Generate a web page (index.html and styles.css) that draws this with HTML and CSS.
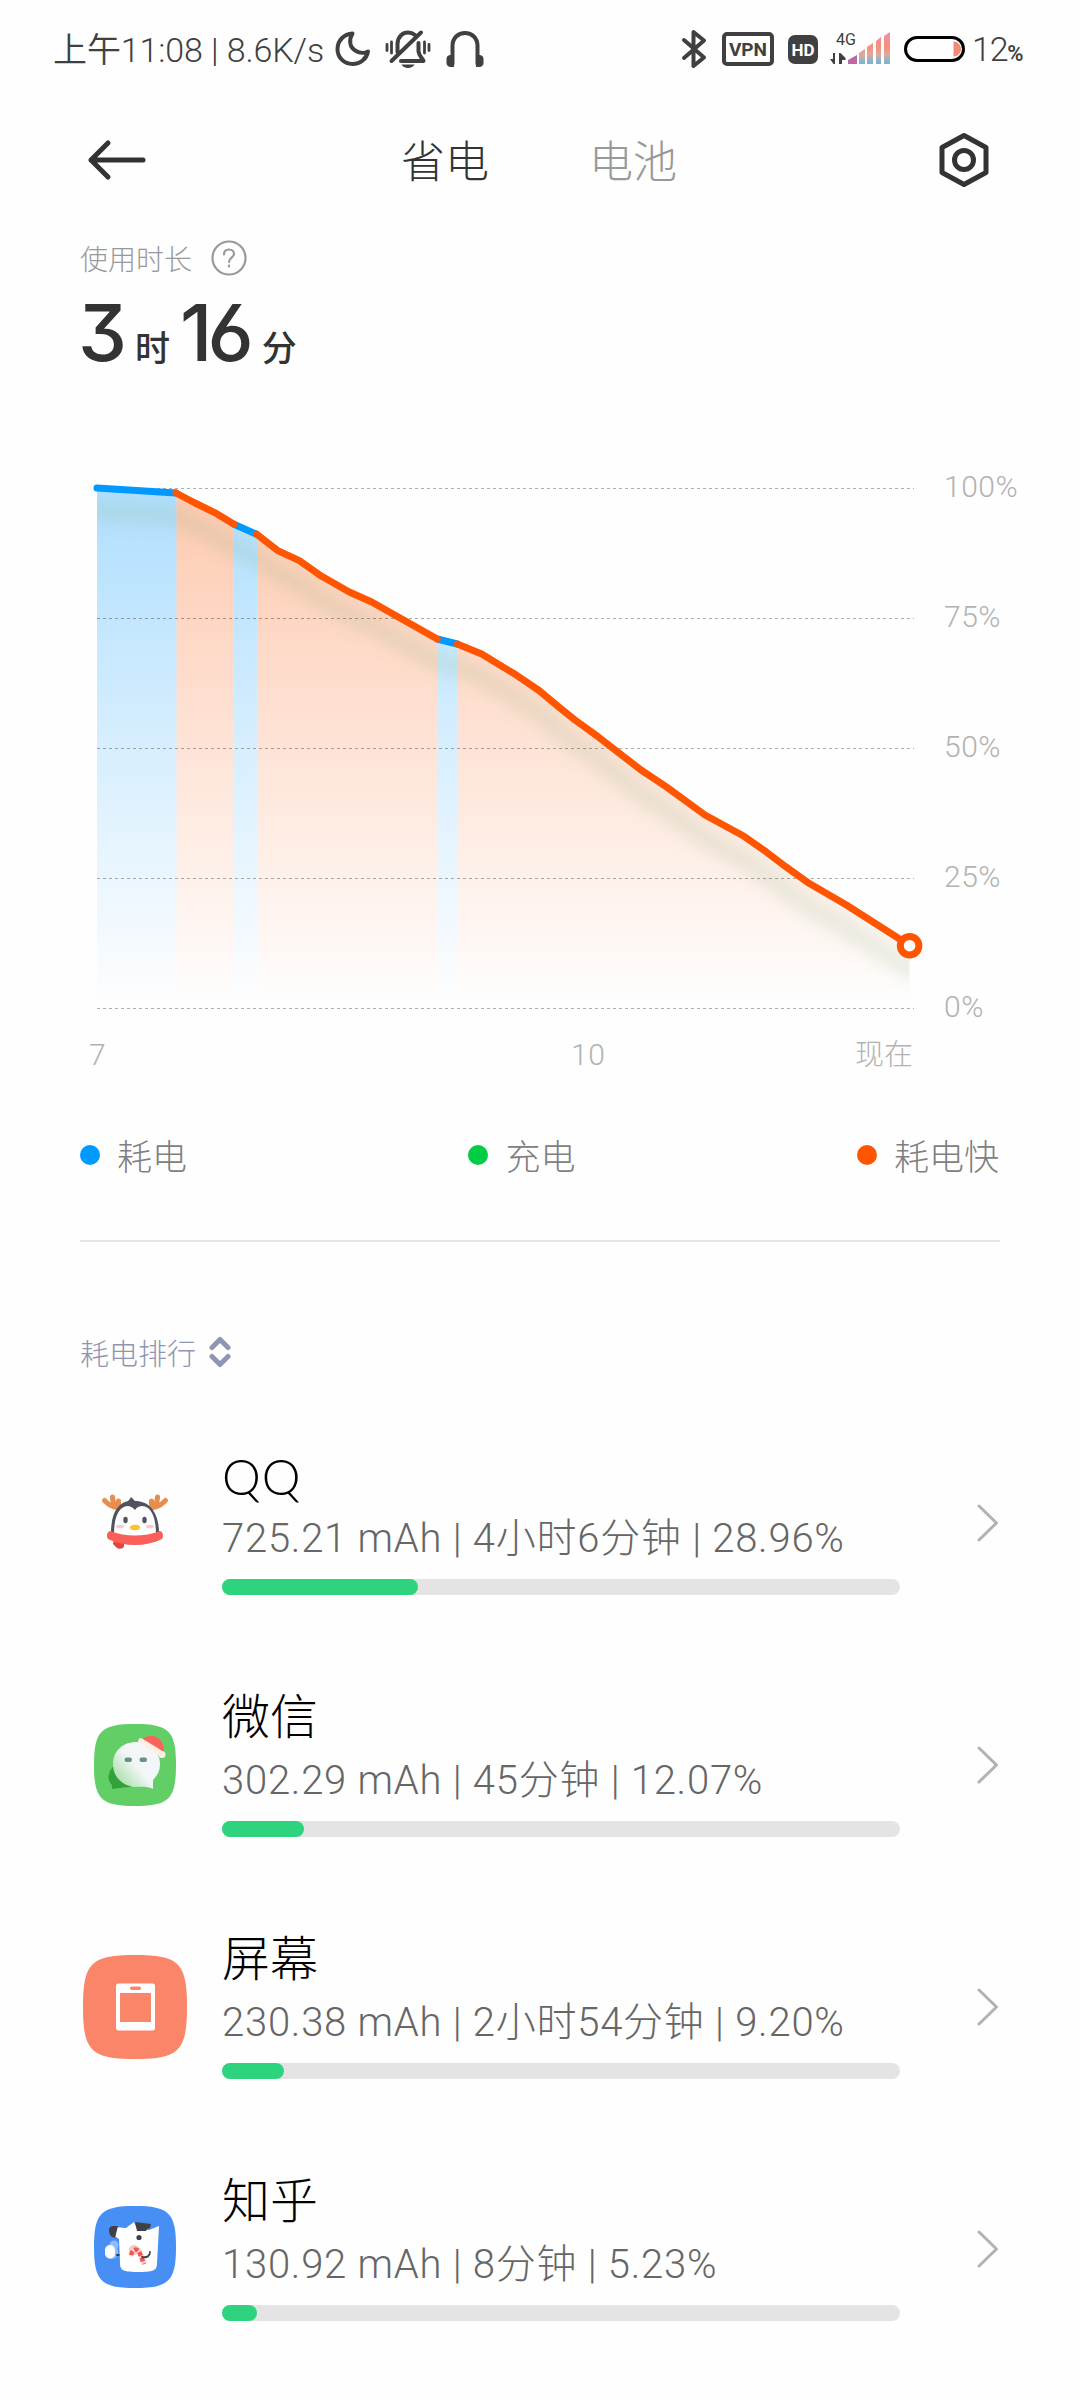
FILE: index.html
```
<!DOCTYPE html>
<html lang="zh-CN">
<head>
  <meta charset="UTF-8">
  <title>省电</title>
  <link rel="stylesheet" href="styles.css">
</head>
<body>
  <div class="status-bar">
    <span class="clock">上午11:08 | 8.6K/s</span>
    <svg class="i-moon" width="36" height="36" viewBox="0 0 36 36"><path d="M17.500 2.500C9 3 2.500 9.500 2.500 18c0 8.500 6.500 15 15 15 8 0 14-5 15.500-12.500-3 1.700-8 2-12-.5C14.500 16.500 13.500 9 17.500 2.500z"/></svg>
    <svg class="i-bell" width="46" height="40" viewBox="0 0 46 40">
      <path d="M12.500 23v-8.500C13 7 18 3.500 23 3.500c2.500 0 5 .8 7 2.500M33.500 14v8.500c.5 4 3.500 6.500 5 9.500H16M6.500 32L36 3.500"/>
      <path class="thin" d="M2 15.500v6M6.500 13v11M39.500 13v11M44 15.500v6"/>
      <path class="solid" d="M16.500 35.500h13c-2 4.500-11 4.500-13 0z"/>
    </svg>
    <svg class="i-phones" width="38" height="38" viewBox="0 0 38 38"><path d="M6.500 34V16C6.500 8 12 3 19 3s12.500 5 12.500 13v18"/><path class="solid" d="M.5 29c0-3 2-4 4-4H8v12H5c-3 0-4.500-2-4.500-4zM37.500 29c0-3-2-4-4-4H30v12h3c3 0 4.500-2 4.500-4z"/></svg>
    <span class="spacer"></span>
    <svg class="i-bt" width="26" height="40" viewBox="0 0 26 40"><path d="M3 11l20 17.500L12.500 37V3L23 11.500 3 29"/></svg>
    <span class="vpn">VPN</span>
    <span class="hd">HD</span>
    <svg class="i-signal" width="62" height="34" viewBox="0 0 62 34">
      <defs>
        <linearGradient id="sig" x1="0" y1="0" x2="0" y2="32" gradientUnits="userSpaceOnUse">
          <stop offset="0" stop-color="#f08cae"/><stop offset=".45" stop-color="#f99079"/><stop offset=".72" stop-color="#dba9a0"/><stop offset="1" stop-color="#6bb8dd"/>
        </linearGradient>
      </defs>
      <text x="6" y="12.500">4G</text>
      <path class="solid" d="M5 21v11H3.500L0 27h3v-6zM9 32V21h1.500l5 5v2H12v4z"/>
      <path fill="#b969a5" d="M18 32v-4l9-5v9z"/>
      <path fill="url(#sig)" d="M29 32V21l6-4v15zM37 32V15l6-4v21zM46 32V9l5-4v27zM54 32V4l6-4v32z"/>
    </svg>
    <svg class="i-battery" width="62" height="28" viewBox="0 0 62 28"><rect x="1.500" y="2.500" width="58" height="23" rx="11.500"/><path d="M49.500 6.500c4 0 7.500 3.500 7.500 7.500s-3.500 7.500-7.500 7.500z"/></svg>
    <span class="level">12<small>%</small></span>
  </div>

  <div class="header">
    <svg class="i-back" width="60" height="44" viewBox="0 0 60 44"><path d="M22 5L5 22l17 17M5 22h52"/></svg>
    <div class="tabs">
      <span class="tab active">省电</span>
      <span class="tab">电池</span>
    </div>
    <svg class="i-settings" width="52" height="56" viewBox="0 0 52 56"><path d="M26 3.500L48 15.500v25L26 52.500 4 40.500v-25z"/><circle cx="26" cy="28" r="9.500"/></svg>
  </div>

  <div class="usage">
    <div class="usage-label">使用时长
      <svg width="36" height="36" viewBox="0 0 36 36"><circle cx="18" cy="18" r="16.500"/><path d="M13 14.500c0-3.500 2-5 5-5s5 2 5 4.500c0 3.500-5 4-5 8"/><path d="M18 25.500v1"/></svg>
    </div>
    <div class="usage-time"><b>3</b><i>时</i><b>16</b><i>分</i></div>
  </div>

  <svg class="chart" width="1080" height="660" viewBox="0 440 1080 660">
    <defs>
      <linearGradient id="blue" x1="0" y1="488" x2="0" y2="1008" gradientUnits="userSpaceOnUse"><stop offset="0" stop-color="#09f" stop-opacity=".31"/><stop offset="1" stop-color="#09f" stop-opacity="0"/></linearGradient>
      <linearGradient id="orange" x1="0" y1="488" x2="0" y2="1008" gradientUnits="userSpaceOnUse"><stop offset="0" stop-color="#f50" stop-opacity=".31"/><stop offset="1" stop-color="#f50" stop-opacity="0"/></linearGradient>
      <filter id="soft" x="-5%" y="-5%" width="110%" height="115%"><feGaussianBlur stdDeviation="7"/></filter>
      <clipPath id="area"><path d="M97 488L176 493 195 503 216.700 513.700 234 524.300 256.700 534.300 277.300 550.300 299.300 560.700 321.700 576.300 349.300 592 371.700 602 437.300 639 457.300 644 481.700 654 516.700 675.300 539 690.500 560 708 575 720 598 736.700 641 770 666 786.700 705 815 744 836.300 766 851.700 785.700 866.700 809 883.300 846.400 905 909.600 945.700V1008H97z"/></clipPath>
    </defs>
    <g clip-path="url(#area)">
      <path fill="url(#blue)" d="M97 480h79.500v528H97zM234 480h23.500v528H234zM437.300 480h20v528h-20z"/>
      <path fill="url(#orange)" d="M176.500 480H234v528h-57.500zM257.500 480h179.800v528H257.500zM457.300 480H910v528H457.300z"/>
      <path class="shadow" filter="url(#soft)" transform="translate(0 23)" d="M96 488L176 493 195 503 216.700 513.700 234 524.300 256.700 534.300 277.300 550.300 299.300 560.700 321.700 576.300 349.300 592 371.700 602 437.300 639 457.300 644 481.700 654 516.700 675.300 539 690.500 560 708 575 720 598 736.700 641 770 666 786.700 705 815 744 836.300 766 851.700 785.700 866.700 809 883.300 846.400 905 909.600 945.700"/>
    </g>
    <path class="grid" d="M97 488.500h817M97 618.500h817M97 748.500h817M97 878.500h817M97 1008.500h817"/>
    <path class="line slow" d="M97 488L176 493M234 524.300l22.700 10M437.300 639l20 5"/>
    <path class="line fast" d="M176 493L195 503 216.700 513.700 234 524.300M256.700 534.300L277.300 550.300 299.300 560.700 321.700 576.300 349.300 592 371.700 602 437.300 639M457.300 644L481.700 654 516.700 675.300 539 690.500 560 708 575 720 598 736.700 641 770 666 786.700 705 815 744 836.300 766 851.700 785.700 866.700 809 883.300 846.400 905 900 939.300"/>
    <circle class="now" cx="909.600" cy="945.700" r="9.300"/>
    <g class="axis">
      <text x="944" y="497">100%</text>
      <text x="944" y="627">75%</text>
      <text x="944" y="757">50%</text>
      <text x="944" y="887">25%</text>
      <text x="944" y="1017">0%</text>
      <text x="89" y="1065">7</text>
      <text x="571" y="1065">10</text>
      <text x="855" y="1065" class="zh">现在</text>
    </g>
  </svg>

  <div class="legend">
    <span class="blue">耗电</span>
    <span class="green">充电</span>
    <span class="orange">耗电快</span>
  </div>

  <div class="rank-title">耗电排行
    <svg width="22" height="32" viewBox="0 0 22 32"><path d="M3 11.500l8-8 8 8M3 20.500l8 8 8-8"/></svg>
  </div>

  <div class="rank">
    <div class="row">
      <svg class="app" width="110" height="110" viewBox="0 0 110 110">
        <g stroke="#e88d4f" stroke-width="5" stroke-linecap="round" fill="none"><path d="M39 40c-8-1-11-4-14.500-7.500M32.500 29c0 4 .5 6 3 9M38.500 33v7"/><path d="M71 40c8-1 11-4 14.500-7.500M77.500 29c0 4-.5 6-3 9M71.500 33v7"/></g>
        <path fill="#50525e" d="M31 65c0-20 7-30 17-32 1-1 2-2 3-4l4 4c15 0 24 12 24 32z"/>
        <path fill="#fdfdfe" d="M34 66c0-15 4-27 13-28 4 0 6 2 8 4 2-3 4-4 8-4 9 1 13 13 13 28z"/>
        <ellipse cx="45.500" cy="52" rx="2.200" ry="3.300" fill="#50525e"/><ellipse cx="64.500" cy="52" rx="2.200" ry="3.300" fill="#50525e"/>
        <ellipse cx="40" cy="58.500" rx="4" ry="1.800" fill="#fcc9cb"/><ellipse cx="70" cy="58.500" rx="4" ry="1.800" fill="#fcc9cb"/>
        <ellipse cx="55" cy="59.500" rx="5" ry="2.800" fill="#f9c22e"/>
        <path fill="#df463f" d="M34 70h10v8c0 3-6 4-8 1l-3-3z"/>
        <path fill="#fa6059" d="M30 63c16 6 34 6 50 0 3 1 4 5 2 8-16 8-38 8-54 0-2-3-1-7 2-8z"/>
      </svg>
      <div class="info">
        <div class="name latin">QQ</div>
        <div class="detail">725.21 mAh | 4小时6分钟 | 28.96%</div>
        <div class="track"><div class="fill" style="width: 28.96%"></div></div>
      </div>
      <svg class="more" width="24" height="40" viewBox="0 0 24 40"><path d="M3 3l17.500 17L3 37"/></svg>
    </div>

    <div class="row">
      <svg class="app" width="110" height="110" viewBox="0 0 110 110">
        <defs><linearGradient id="bubble" x1=".1" y1=".85" x2=".5" y2=".5"><stop offset="0" stop-color="#a9dfaa"/><stop offset="1" stop-color="#f3f6f8"/></linearGradient></defs>
        <path fill="#61cf66" d="M14 55c0-34 7-41 41-41s41 7 41 41-7 41-41 41-41-7-41-41z"/>
        <path fill="#33a23b" d="M36 54c-8 6-10 16-4 21v4c12-2 20-1 30-6z"/>
        <path fill="url(#bubble)" d="M56 32c14 0 24 9 24 22 0 7-3 12-7 16v9c-6-3-12-2-19-2-12-2-21-10-21-23 0-13 10-22 23-22z"/>
        <rect x="44.500" y="47.500" width="7.500" height="4.500" rx="2.250" fill="#6b8f80"/><rect x="59.500" y="47.500" width="7.500" height="4.500" rx="2.250" fill="#6b8f80"/>
        <path fill="#fa625c" d="M61 31c6-8 22-7 23 9v3z"/>
        <path stroke="#fdeee0" stroke-width="5.500" d="M61 31L79 42"/>
        <circle cx="82" cy="44.500" r="3.500" fill="#fdeee0"/>
      </svg>
      <div class="info">
        <div class="name">微信</div>
        <div class="detail">302.29 mAh | 45分钟 | 12.07%</div>
        <div class="track"><div class="fill" style="width: 12.07%"></div></div>
      </div>
      <svg class="more" width="24" height="40" viewBox="0 0 24 40"><path d="M3 3l17.500 17L3 37"/></svg>
    </div>

    <div class="row">
      <svg class="app" width="110" height="110" viewBox="0 0 110 110">
        <path fill="#fb8569" d="M3 55C3 11 11 3 55 3s52 8 52 52-8 52-52 52S3 99 3 55z"/>
        <rect x="36" y="31.500" width="39" height="47" rx="2.500" fill="#fff"/>
        <path fill="#fb8569" d="M40 41h31v29H40z"/><rect x="50" y="34.500" width="11" height="3.500" rx="1.700" fill="#fb8569"/>
      </svg>
      <div class="info">
        <div class="name">屏幕</div>
        <div class="detail">230.38 mAh | 2小时54分钟 | 9.20%</div>
        <div class="track"><div class="fill" style="width: 9.2%"></div></div>
      </div>
      <svg class="more" width="24" height="40" viewBox="0 0 24 40"><path d="M3 3l17.500 17L3 37"/></svg>
    </div>

    <div class="row">
      <svg class="app" width="110" height="110" viewBox="0 0 110 110">
        <path fill="#488ff5" d="M14 53c0-34 7-41 41-41s41 7 41 41-7 41-41 41-41-7-41-41z"/>
        <circle cx="34" cy="51" r="4.500" fill="#8fbdfb"/>
        <rect x="25" y="51" width="13" height="14" rx="6" fill="#8fbdfb"/><rect x="25" y="51" width="10" height="13.500" rx="5" fill="#fff"/>
        <path stroke="#3c3d42" stroke-width="2" d="M37 61h4"/>
        <path fill="#fff" d="M34 33l12 1 8-6 3 7 12 1 10-4-2 37c0 8-4 9-20 9s-17-3-17-10l-1-23-9-6z"/>
        <path fill="#404145" d="M29 36c0-3 2-4 4-4h5l-3 12c-4-1-6-3-6-8zM55 28l16 2-1 4-3 1-1 2H57z"/>
        <circle cx="59" cy="43.500" r="2.600" fill="#404145"/>
        <circle cx="54" cy="56" r="5" fill="#fcc5c4"/>
        <path fill="none" stroke="#fbd3d1" stroke-width="5" d="M52 60c2-6 7-6 8-1l4 9"/>
        <path fill="none" stroke="#ef5750" stroke-width="4.500" stroke-linecap="butt" stroke-dasharray="4 2" d="M51 61c2-7 7-7 9-1l4 10"/>
        <path fill="none" stroke="#404145" stroke-width="1.800" stroke-linecap="round" d="M62 63c5 1 8-1 8-5"/>
      </svg>
      <div class="info">
        <div class="name">知乎</div>
        <div class="detail">130.92 mAh | 8分钟 | 5.23%</div>
        <div class="track"><div class="fill" style="width: 5.23%"></div></div>
      </div>
      <svg class="more" width="24" height="40" viewBox="0 0 24 40"><path d="M3 3l17.500 17L3 37"/></svg>
    </div>
  </div>
</body>
</html>
```
FILE: styles.css
```
* {
  box-sizing: border-box;
}
body {
  margin: 0;
  width: 1080px;
  height: 2400px;
  overflow: hidden;
  background: #fefefe;
  font-family: Roboto, "Noto Sans CJK SC", sans-serif;
  font-weight: 300;
  color: #333;
}
svg {
  display: block;
  flex: none;
  fill: none;
  stroke-linecap: round;
  stroke-linejoin: round;
}

/* status bar */
.status-bar {
  display: flex;
  align-items: center;
  height: 98px;
  padding: 0 56px 0 53px;
  color: #404040;
}
.status-bar svg {
  stroke: #404040;
  stroke-width: 4;
}
.status-bar .solid {
  fill: #404040;
  stroke: none;
}
.clock {
  width: 282px;
  padding-bottom: 4px;
  font-size: 34px;
  font-weight: 350;
  letter-spacing: -.1px;
  white-space: nowrap;
}
.i-bell {
  margin-left: 14px;
}
.i-bell .thin {
  stroke-width: 2.8;
}
.i-phones {
  margin-left: 15px;
}
.spacer {
  flex: 1;
}
.vpn {
  width: 52px;
  height: 34px;
  margin-left: 15px;
  border: 4px solid #404040;
  border-radius: 5px;
  font: 700 19px/27px Roboto, sans-serif;
  text-align: center;
}
.hd {
  width: 30px;
  height: 29px;
  margin-left: 14px;
  border-radius: 7px;
  background: #404040;
  color: #fff;
  font: 700 17px/30px Roboto, sans-serif;
  text-align: center;
}
.status-bar .i-signal {
  margin-left: 12px;
  overflow: visible;
  stroke: none;
}
.i-signal text {
  font-size: 16px;
  font-weight: 400;
  fill: #404040;
}
.i-battery {
  margin-left: 12px;
}
.status-bar .i-battery rect {
  stroke: #000;
  stroke-width: 3;
}
.status-bar .i-battery path {
  fill: #f58a78;
  stroke: none;
}
.level {
  width: 52px;
  margin-left: 6px;
  font-size: 34px;
  font-weight: 350;
  letter-spacing: -1.2px;
  white-space: nowrap;
}
.level small {
  font-size: 22px;
  font-weight: 600;
}

/* header */
.header {
  display: flex;
  align-items: center;
  justify-content: space-between;
  height: 124px;
  padding: 0 90px 0 86px;
}
.i-back,
.i-settings {
  stroke: #333;
  stroke-width: 5;
}
.tabs {
  display: flex;
  gap: 100px;
  padding: 5px 6px 0 0;
}
.tab {
  font-size: 44px;
  line-height: 60px;
  color: #999;
}
.tab.active {
  color: #333;
}

/* usage time */
.usage {
  height: 218px;
  padding: 15px 80px 0;
}
.usage-label {
  display: flex;
  align-items: center;
  gap: 19px;
  height: 42px;
  font-size: 28px;
  color: #999;
}
.usage-label svg {
  stroke: #999;
  stroke-width: 2.2;
}
.usage-time {
  display: flex;
  align-items: baseline;
  height: 100px;
  margin-left: -2px;
  padding-top: 4px;
  line-height: 100px;
}
.usage-time b {
  font-family: Inter, sans-serif;
  font-size: 78px;
  font-weight: 450;
  letter-spacing: -5px;
  font-feature-settings: "ss01", "cv09";
}
.usage-time i {
  margin: 0 10px 0 13px;
  font-size: 35px;
  font-style: normal;
  font-weight: 500;
}

/* chart */
.chart .shadow {
  stroke: rgba(120, 170, 110, .14);
  stroke-width: 22;
}
.chart .grid {
  stroke: #000;
  stroke-opacity: .32;
  stroke-width: 1;
  stroke-linecap: butt;
  stroke-dasharray: 3 3;
}
.chart .line {
  stroke-width: 7;
}
.chart .slow {
  stroke: #0099ff;
}
.chart .fast {
  stroke: #ff5500;
}
.chart .now {
  fill: #fff;
  stroke: #ff5500;
  stroke-width: 7;
}
.axis text {
  font-size: 30px;
  letter-spacing: .5px;
  fill: #b2b2b2;
}
.axis .zh {
  font-size: 29px;
  letter-spacing: 0;
}

/* legend */
.legend {
  display: flex;
  justify-content: space-between;
  margin: 0 81px 0 80px;
  height: 142px;
  padding-top: 30px;
}
.legend span {
  display: flex;
  align-items: center;
  gap: 17px;
  height: 48px;
  font-size: 35px;
  color: #808080;
}
.legend span::before {
  content: "";
  width: 20px;
  height: 20px;
  margin-top: 2px;
  border-radius: 50%;
  background: #0099ff;
}
.legend .green::before {
  background: #00cc44;
}
.legend .orange::before {
  background: #ff5500;
}

/* ranking */
.rank-title {
  display: flex;
  align-items: center;
  gap: 13px;
  height: 162px;
  margin: -2px 80px 0;
  padding-top: 60px;
  border-top: 2px solid #e4e4e4;
  font-size: 29px;
  color: #8f95b2;
}
.rank-title svg {
  stroke: #8f95b2;
  stroke-width: 5;
}
.row {
  display: flex;
  align-items: center;
  height: 242px;
  padding: 0 80px;
}
.info {
  width: 678px;
  margin: -5px 0 0 32px;
}
.name {
  height: 60px;
  line-height: 60px;
  font-size: 48px;
  color: #000;
}
.name.latin {
  font-family: Lato, sans-serif;
  font-size: 49px;
  letter-spacing: 1px;
}
.detail {
  height: 66px;
  line-height: 66px;
  font-size: 40px;
  letter-spacing: .75px;
  color: #666;
  white-space: nowrap;
}
.track {
  height: 16px;
  margin-top: 7px;
  border-radius: 8px;
  background: #e4e4e4;
}
.fill {
  height: 16px;
  border-radius: 8px;
  background: #2ed47d;
}
.more {
  margin-left: auto;
  stroke: #b2b2b2;
  stroke-width: 3;
}
```
